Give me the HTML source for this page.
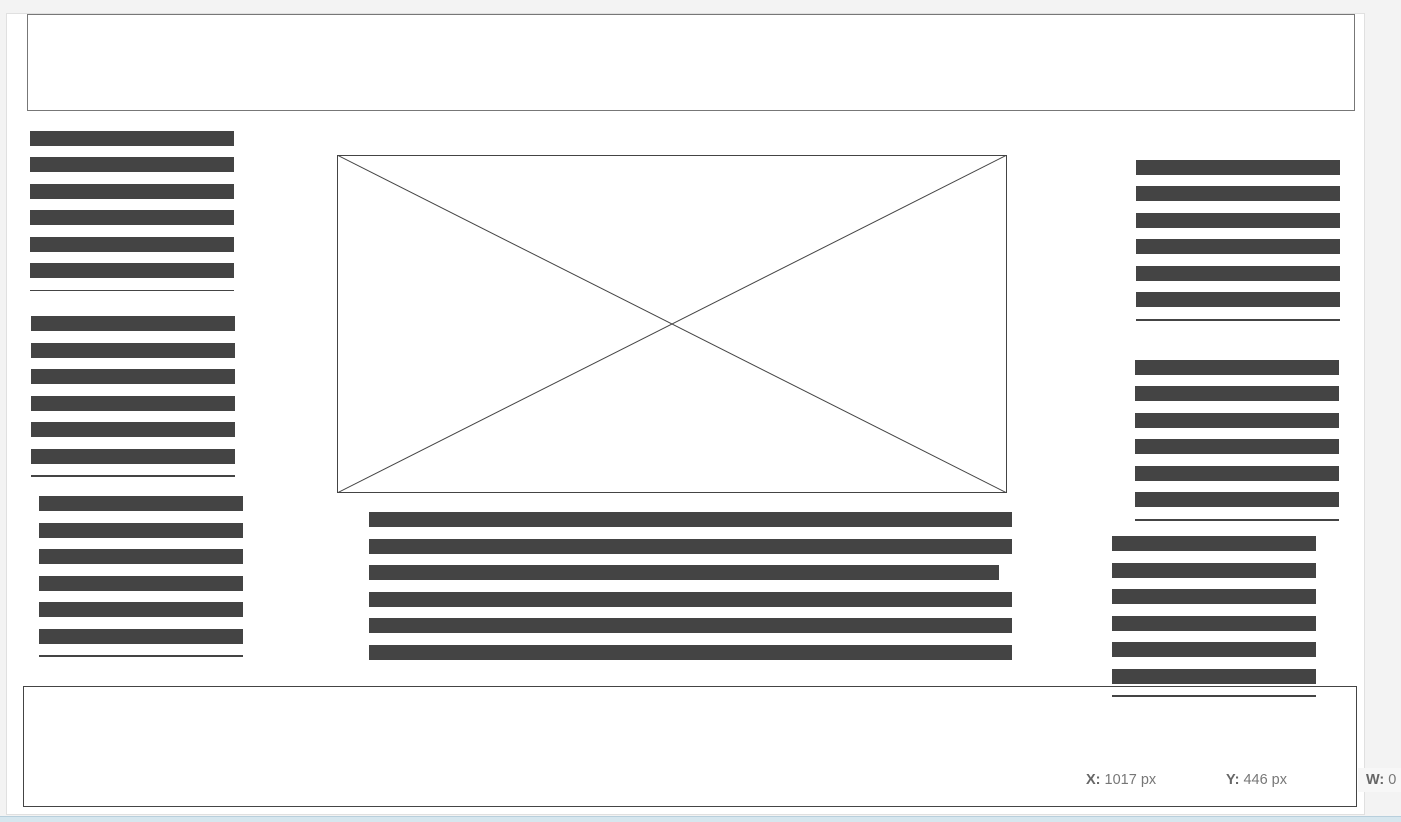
<!DOCTYPE html>
<html><head><meta charset="utf-8"><style>
html,body{margin:0;padding:0;width:1401px;height:821px;overflow:hidden;background:#f3f3f3;font-family:"Liberation Sans",sans-serif}
.a{position:absolute}
.p{left:6px;top:13px;width:1359px;height:802px;background:#fff;border:1px solid #e0e0e0;box-sizing:border-box}
.b{position:absolute;height:15px;background:#444;width:204px}
.l{position:absolute;height:2px;background:#444;width:204px}
.t{position:absolute;font-size:14.5px;color:#777}
.t b{color:#666}
</style></head><body>
<div class="a p"></div>
<div class="a" style="left:27px;top:14px;width:1328px;height:97px;border:1px solid #777;box-sizing:border-box"></div>
<div class="a" style="left:23px;top:686px;width:1334px;height:121px;border:1px solid #444;box-sizing:border-box"></div>
<svg class="a" style="left:337px;top:155px" width="670" height="338"><rect x="0.5" y="0.5" width="669" height="337" fill="none" stroke="#444"/><line x1="0" y1="0" x2="670" y2="338" stroke="#444"/><line x1="670" y1="0" x2="0" y2="338" stroke="#444"/></svg>

<div class="b" style="left:30px;top:131px"></div><div class="b" style="left:30px;top:157px"></div><div class="b" style="left:30px;top:184px"></div><div class="b" style="left:30px;top:210px"></div><div class="b" style="left:30px;top:237px"></div><div class="b" style="left:30px;top:263px"></div><div class="l" style="left:30px;top:290px;height:1px"></div>

<div class="b" style="left:31px;top:316px"></div><div class="b" style="left:31px;top:343px"></div><div class="b" style="left:31px;top:369px"></div><div class="b" style="left:31px;top:396px"></div><div class="b" style="left:31px;top:422px"></div><div class="b" style="left:31px;top:449px"></div><div class="l" style="left:31px;top:475px"></div>

<div class="b" style="left:39px;top:496px"></div><div class="b" style="left:39px;top:523px"></div><div class="b" style="left:39px;top:549px"></div><div class="b" style="left:39px;top:576px"></div><div class="b" style="left:39px;top:602px"></div><div class="b" style="left:39px;top:629px"></div><div class="l" style="left:39px;top:655px"></div>

<div class="b" style="left:1136px;top:160px"></div><div class="b" style="left:1136px;top:186px"></div><div class="b" style="left:1136px;top:213px"></div><div class="b" style="left:1136px;top:239px"></div><div class="b" style="left:1136px;top:266px"></div><div class="b" style="left:1136px;top:292px"></div><div class="l" style="left:1136px;top:319px"></div>

<div class="b" style="left:1135px;top:360px"></div><div class="b" style="left:1135px;top:386px"></div><div class="b" style="left:1135px;top:413px"></div><div class="b" style="left:1135px;top:439px"></div><div class="b" style="left:1135px;top:466px"></div><div class="b" style="left:1135px;top:492px"></div><div class="l" style="left:1135px;top:519px"></div>

<div class="b" style="left:1112px;top:536px"></div><div class="b" style="left:1112px;top:563px"></div><div class="b" style="left:1112px;top:589px"></div><div class="b" style="left:1112px;top:616px"></div><div class="b" style="left:1112px;top:642px"></div><div class="b" style="left:1112px;top:669px"></div><div class="l" style="left:1112px;top:695px"></div>

<div class="b" style="left:369px;top:512px;width:643px"></div><div class="b" style="left:369px;top:539px;width:643px"></div><div class="b" style="left:369px;top:565px;width:630px"></div><div class="b" style="left:369px;top:592px;width:643px"></div><div class="b" style="left:369px;top:618px;width:643px"></div><div class="b" style="left:369px;top:645px;width:643px"></div>

<div class="t" style="left:1086px;top:772px"><b>X:</b> 1017 px</div>
<div class="t" style="left:1226px;top:772px"><b>Y:</b> 446 px</div>
<div class="a" style="left:1358px;top:768px;width:43px;height:24px;background:#f7f7f7"></div>
<div class="t" style="left:1366px;top:772px"><b>W:</b> 0</div>
<div class="a" style="left:0;top:816px;width:1401px;height:5px;background:#d6e6ee;border-top:1px solid #b8cfdc"></div>
</body></html>
